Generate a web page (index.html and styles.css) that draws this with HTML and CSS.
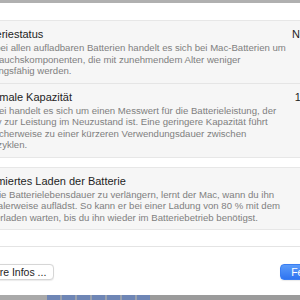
FILE: index.html
```html
<!DOCTYPE html>
<html lang="de">
<head>
    <meta charset="UTF-8">
    <meta name="viewport" content="width=device-width, initial-scale=1.0">
    <title>Batteriezustand</title>
    <link rel="stylesheet" href="styles.css">
</head>
<body>
    <div class="top-edge"></div>

    <div class="sheet">
        <div class="sheet-body">
            <div class="group">
                <div class="row">
                    <div class="row-text">
                        <div class="row-title">Batteriestatus</div>
                        <p class="row-desc">Wie bei allen aufladbaren Batterien handelt es sich bei Mac-Batterien um Verbrauchskomponenten, die mit zunehmendem Alter weniger leistungsfähig werden.</p>
                    </div>
                    <div class="row-value">Normal</div>
                </div>
                <div class="row">
                    <div class="row-text">
                        <div class="row-title">Maximale Kapazität</div>
                        <p class="row-desc">Hierbei handelt es sich um einen Messwert für die Batterieleistung, der relativ zur Leistung im Neuzustand ist. Eine geringere Kapazität führt möglicherweise zu einer kürzeren Verwendungsdauer zwischen Ladezyklen.</p>
                    </div>
                    <div class="row-value">100 %</div>
                </div>
            </div>

            <div class="group">
                <div class="row">
                    <div class="row-text">
                        <div class="row-title">Optimiertes Laden der Batterie</div>
                        <p class="row-desc">Um die Batterielebensdauer zu verlängern, lernt der Mac, wann du ihn normalerweise auflädst. So kann er bei einer Ladung von 80 % mit dem Weiterladen warten, bis du ihn wieder im Batteriebetrieb benötigst.</p>
                    </div>
                </div>
            </div>
        </div>

        <div class="footer">
            <button class="btn">Weitere Infos ...</button>
            <button class="btn btn-primary">Fertig</button>
        </div>
    </div>

    <div class="desktop-strip">
        <span class="strip-light"></span>
        <span class="strip-blue"></span>
        <span class="strip-dark"></span>
    </div>
</body>
</html>
```

FILE: styles.css
```css
html, body {
    margin: 0;
    padding: 0;
}
body {
    font-family: 'Liberation Sans', Arial, sans-serif;
    background-color: #ffffff;
    width: 300px;
    height: 300px;
    overflow: hidden;
    display: flex;
    flex-direction: column;
}
.top-edge {
    height: 3px;
    background-color: #b0b0b0;
    flex-shrink: 0;
}

.sheet {
    width: 372px;
    margin-left: -35px;
    background-color: #ffffff;
    flex-shrink: 0;
}
.sheet-body {
    padding: 17px 0 16px;
    display: flex;
    flex-direction: column;
    gap: 9px;
}
.group {
    background-color: #f6f6f6;
    border: 1px solid #e7e7e7;
    border-radius: 6px;
}
.row {
    display: flex;
    justify-content: space-between;
    align-items: flex-start;
    padding: 7px 10px 6px 10px;
}
.row + .row {
    border-top: 1px solid #e5e5e5;
}
.row-title {
    font-size: 11px;
    line-height: 12px;
    color: #1e1e1e;
}
.row-desc {
    margin: 2px 0 0;
    width: 316px;
    font-size: 9.6px;
    line-height: 11.5px;
    color: #808080;
}
.row-value {
    font-size: 11px;
    line-height: 12px;
    color: #1e1e1e;
}

.footer {
    border-top: 1px solid #e4e4e4;
    padding: 17px 8px 15px 0;
    display: flex;
    justify-content: space-between;
}
.btn {
    font-family: 'Liberation Sans', Arial, sans-serif;
    font-size: 10.5px;
    height: 16px;
    line-height: 14px;
    padding: 0 7px;
    background-color: #ffffff;
    color: #1e1e1e;
    border: 1px solid #d6d6d6;
    border-radius: 4px;
    box-shadow: 0 0.5px 1px rgba(0, 0, 0, 0.08);
}
.btn-primary {
    padding: 0 10px;
    color: #ffffff;
    border-color: #3a7ef2;
    background: linear-gradient(#5a9bfa, #2f74f1);
}

.desktop-strip {
    flex: 1;
    display: flex;
}
.strip-light {
    width: 47px;
    background-color: #a9a9a9;
}
.strip-blue {
    width: 103px;
    background: repeating-linear-gradient(90deg, #6f86b5 0 13px, #9aa1ad 13px 15px);
}
.strip-dark {
    flex: 1;
    background-color: #9b9b9b;
}
```
